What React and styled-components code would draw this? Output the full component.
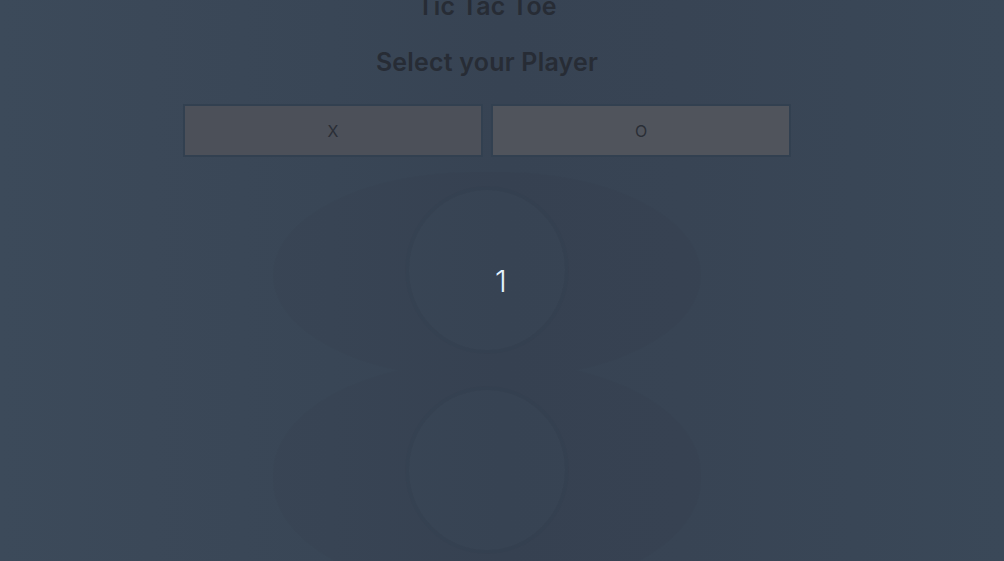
import React from "react";
import styled, { createGlobalStyle } from "styled-components";

const GlobalStyle = createGlobalStyle`
  html, body {
    margin: 0;
    padding: 0;
    height: 100%;
  }
  body {
    font-family: Inter, "Open Sans", sans-serif;
    background: #384555;
    overflow: hidden;
  }
`;

const Page = styled.div`
  position: relative;
  width: 1004px;
  height: 561px;
  overflow: hidden;
  background: linear-gradient(
    90deg,
    #3c4a5a 0%,
    #3b4858 15%,
    #394656 33%,
    #374353 50%,
    #384454 68%,
    #394656 85%,
    #3a4858 100%
  );
`;

const Backdrop = styled.svg`
  position: absolute;
  left: 0;
  top: 0;
  pointer-events: none;
`;

const Column = styled.div`
  position: relative;
  width: 974px;
  display: flex;
  flex-direction: column;
  align-items: center;
`;

const Title = styled.h1`
  margin: -9px 0 0;
  font-size: 25px;
  font-weight: 600;
  letter-spacing: 0.1px;
  color: #272c35;
`;

const Subtitle = styled.h2`
  margin: 26px 0 0;
  font-size: 25px;
  font-weight: 600;
  letter-spacing: 0.2px;
  color: #272c35;
`;

const PlayerRow = styled.div`
  display: flex;
  gap: 8px;
  margin-top: 27px;
`;

const PlayerButton = styled.button`
  box-sizing: border-box;
  width: 300px;
  height: 53px;
  border: 2px solid #324050;
  background: ${(p) => (p.$alt ? "#50545c" : "#4c5059")};
  color: #2a2e36;
  font-family: Inter, "Open Sans", sans-serif;
  font-size: 16px;
  font-weight: 400;
  cursor: pointer;
  padding: 0;
`;

const Board = styled.div`
  display: flex;
  justify-content: center;
  margin-top: 106px;
  padding-left: 28px;
`;

const Count = styled.span`
  font-size: 30px;
  font-weight: 300;
  color: #e4f2ff;
  line-height: 36px;
`;

export default function App() {
  return (
    <>
      <GlobalStyle />
      <Page>
        <Backdrop width="1004" height="561" viewBox="0 0 1004 561">
          <defs>
            <mask id="eight">
              <rect x="273" y="172" width="428" height="206" rx="200" ry="104" fill="#fff" />
              <rect x="273" y="362" width="428" height="230" rx="200" ry="112" fill="#fff" />
              <ellipse cx="487" cy="270" rx="78" ry="80" fill="#000" />
              <ellipse cx="487" cy="470" rx="78" ry="80" fill="#000" />
            </mask>
          </defs>
          <rect x="0" y="0" width="1004" height="561" fill="rgba(20, 30, 40, 0.03)" mask="url(#eight)" />
          <ellipse cx="487" cy="270" rx="80" ry="82" fill="none" stroke="rgba(20,30,40,0.02)" strokeWidth="4" />
          <ellipse cx="487" cy="470" rx="80" ry="82" fill="none" stroke="rgba(20,30,40,0.02)" strokeWidth="4" />
        </Backdrop>
        <Column>
          <Title>Tic Tac Toe</Title>
          <Subtitle>Select your Player</Subtitle>
          <PlayerRow>
            <PlayerButton>X</PlayerButton>
            <PlayerButton $alt>O</PlayerButton>
          </PlayerRow>
          <Board>
            <Count>1</Count>
          </Board>
        </Column>
      </Page>
    </>
  );
}
